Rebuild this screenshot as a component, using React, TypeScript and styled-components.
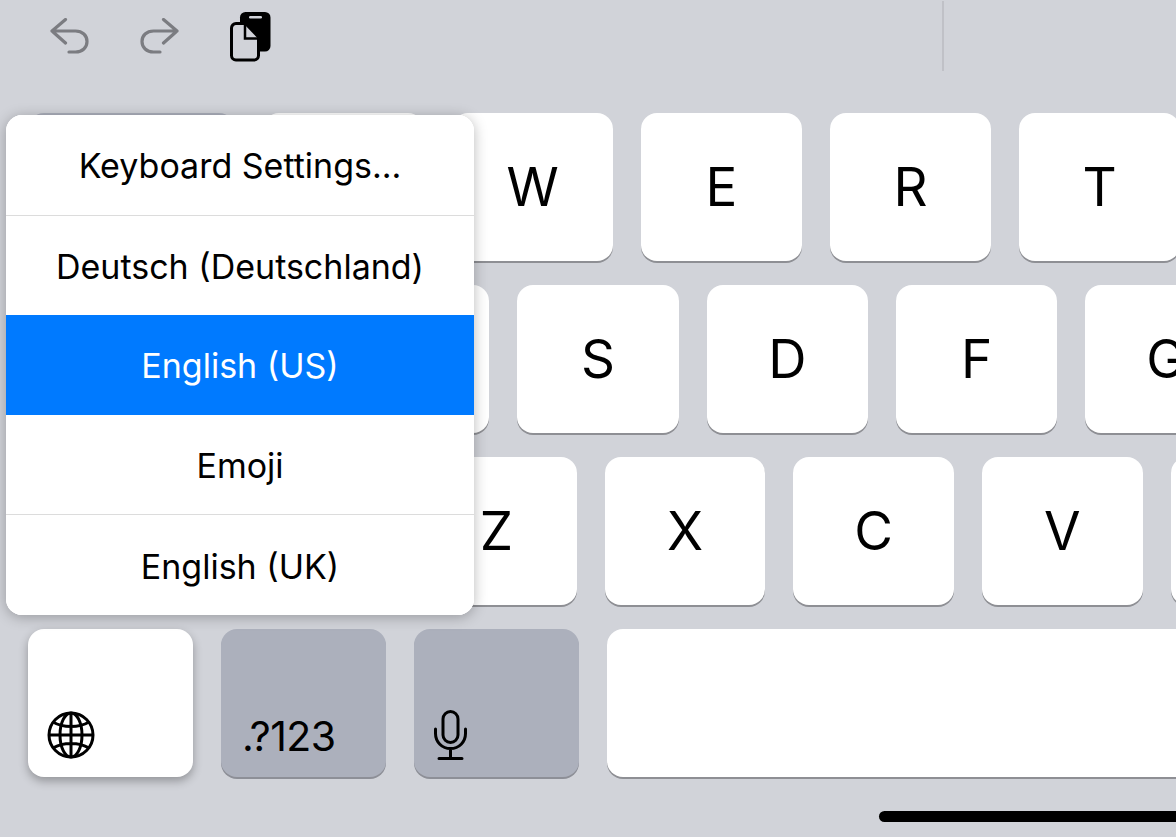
import styled, { createGlobalStyle } from "styled-components"

const GlobalStyle = createGlobalStyle`
  html, body {
    margin: 0;
    padding: 0;
    background: #d1d3d9;
    overflow: hidden;
  }
`

const Screen = styled.div`
  position: relative;
  width: 1176px;
  height: 837px;
  overflow: hidden;
  background: #d1d3d9;
  font-family: Inter, "Liberation Sans", sans-serif;
  color: #000;
`

const Toolbar = styled.div`
  height: 113px;
  display: flex;
  align-items: flex-start;
`

const ToolIcon = styled.svg`
  display: block;
  flex: none;
`

const UndoGroup = styled.div`
  display: flex;
  gap: 51px;
  padding: 18px 0 0 50px;
`

const CopyIcon = styled(ToolIcon)`
  margin: 12px 0 0 51px;
`

const Divider = styled.div`
  width: 2px;
  height: 70px;
  margin: 1px 0 0 671px;
  background: #c0c1c7;
`

const Rows = styled.div`
  display: flex;
  flex-direction: column;
  gap: 24px;
  padding-left: 28px;
`

const Row = styled.div`
  display: flex;
  gap: 28px;
`

const Key = styled.div<{ $w: number; $dark?: boolean; $raised?: boolean }>`
  flex: none;
  box-sizing: border-box;
  width: ${(p) => p.$w}px;
  height: 148px;
  border-radius: 16px;
  background: ${(p) => (p.$dark ? "#acb0bc" : "#fff")};
  box-shadow: ${(p) =>
    p.$raised
      ? "0 4px 10px rgba(0, 0, 0, 0.3)"
      : `0 2px 0 ${p.$dark ? "#8d8f97" : "#8e8f94"}`};
  display: flex;
  align-items: center;
  justify-content: center;
  font-size: 53px;
  line-height: 1;
`

const CornerKey = styled(Key)<{ $left: number; $bottom: number }>`
  align-items: flex-end;
  justify-content: flex-start;
  padding: 0 0 ${(p) => p.$bottom}px ${(p) => p.$left}px;
`

const NumberLabel = styled.span`
  font-size: 41px;
  letter-spacing: -0.5px;
  line-height: 1;
`

const HomeIndicator = styled.div`
  position: absolute;
  left: 879px;
  top: 811px;
  width: 340px;
  height: 11px;
  border-radius: 6px;
  background: #000;
`

const MenuShadow = styled.div`
  position: absolute;
  left: 6px;
  top: 115px;
  width: 468px;
  height: 500px;
  border-radius: 16px;
  box-shadow: 0 2px 14px rgba(0, 0, 0, 0.28);
`

const Menu = styled.div`
  position: absolute;
  left: 6px;
  top: 115px;
  width: 468px;
  height: 500px;
  border-radius: 16px;
  overflow: hidden;
  background: #fff;
  display: flex;
  flex-direction: column;
`

const MenuItem = styled.div<{ $active?: boolean; $line?: boolean }>`
  flex: 1;
  display: flex;
  align-items: center;
  justify-content: center;
  padding-top: 2px;
  font-size: 34px;
  background: ${(p) => (p.$active ? "#007aff" : "#fff")};
  color: ${(p) => (p.$active ? "#fff" : "#000")};
  border-bottom: ${(p) => (p.$line ? "1px solid #dcdcdc" : "none")};
`

const menuItems = [
  { label: "Keyboard Settings...", line: true },
  { label: "Deutsch (Deutschland)" },
  { label: "English (US)", active: true },
  { label: "Emoji", line: true },
  { label: "English (UK)" },
]

const row1 = ["W", "E", "R", "T"]
const row2 = ["A", "S", "D", "F", "G"]
const row3 = ["Z", "X", "C", "V", ""]

function UndoIcon({ flip }: { flip?: boolean }) {
  return (
    <ToolIcon width="39" height="36" viewBox="0 0 39 36" fill="none" style={flip ? { transform: "scaleX(-1)" } : undefined}>
      <path
        d="M15.5 1.5 2 13 15.5 25M2 13H25.5C32.5 13 37 17.5 37 23.500C37 29.500 32.500 34 25.500 34H19"
        stroke="#7b7c81"
        strokeWidth="3.2"
        strokeLinecap="round"
        strokeLinejoin="round"
      />
    </ToolIcon>
  )
}

function GlobeIcon() {
  return (
    <svg width="48" height="48" viewBox="0 0 48 48" fill="none" stroke="#000" strokeWidth="3" style={{ display: "block" }}>
      <circle cx="24" cy="24" r="22" />
      <ellipse cx="24" cy="24" rx="11" ry="22" />
      <path d="M24 2V46M2 24H46M6 11C16 17 32 17 42 11M6 37C16 31 32 31 42 37" />
    </svg>
  )
}

function MicIcon() {
  return (
    <svg width="36" height="50" viewBox="0 0 36 50" fill="none" stroke="#000" strokeWidth="3" strokeLinecap="round" style={{ display: "block" }}>
      <rect x="11" y="1.500" width="15" height="31" rx="7.500" />
      <path d="M3.500 19V23.500C3.500 32 10 38.500 18.500 38.500C27 38.500 33.500 32 33.500 23.500V19M18.500 38.500V48.500M7 48.500H30" />
    </svg>
  )
}

export default function App() {
  return (
    <Screen>
      <GlobalStyle />
      <Toolbar>
        <UndoGroup>
          <UndoIcon />
          <UndoIcon flip />
        </UndoGroup>
        <CopyIcon width="41" height="50" viewBox="0 0 41 50" fill="none">
          <rect x="10" y="0" width="30.500" height="39.500" rx="5.500" fill="#000" />
          <rect x="19" y="4" width="13" height="2.500" rx="1.200" fill="#d1d3d9" />
          <path
            d="M6 11.500H15.500L28.500 25V43.500A4.500 4.500 0 0 1 24 48H6A4.500 4.500 0 0 1 1.500 43.500V16A4.500 4.500 0 0 1 6 11.500Z"
            fill="#d1d3d9"
            stroke="#000"
            strokeWidth="3"
          />
          <path d="M15 12V26.500H28.500" stroke="#000" strokeWidth="2.500" />
        </CopyIcon>
        <Divider />
      </Toolbar>
      <Rows>
        <Row>
          <Key $w={207} $dark />
          <Key $w={161} />
          {row1.map((k) => (
            <Key key={k} $w={161}>{k}</Key>
          ))}
        </Row>
        <Row>
          <Key $w={272} $dark />
          {row2.map((k) => (
            <Key key={k} $w={161.33}>{k}</Key>
          ))}
        </Row>
        <Row>
          <Key $w={360} $dark />
          {row3.map((k, i) => (
            <Key key={i} $w={160.67}>{k}</Key>
          ))}
        </Row>
        <Row>
          <CornerKey $w={165} $raised $left={19} $bottom={18}>
            <GlobeIcon />
          </CornerKey>
          <CornerKey $w={165} $dark $left={21} $bottom={20}>
            <NumberLabel>.?123</NumberLabel>
          </CornerKey>
          <CornerKey $w={165} $dark $left={18} $bottom={17}>
            <MicIcon />
          </CornerKey>
          <Key $w={700} />
        </Row>
      </Rows>
      <HomeIndicator />
      <MenuShadow />
      <Menu>
        {menuItems.map((item) => (
          <MenuItem key={item.label} $active={item.active} $line={item.line}>
            {item.label}
          </MenuItem>
        ))}
      </Menu>
    </Screen>
  )
}
